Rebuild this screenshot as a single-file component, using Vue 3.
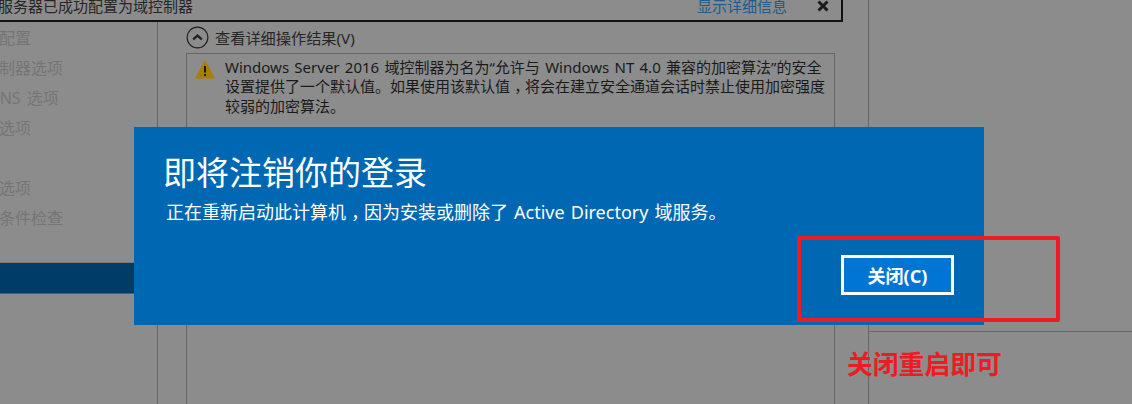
<template>
  <div class="page">
    <div class="wizard">
      <div class="banner">
        <span class="banner-text">服务器已成功配置为域控制器</span>
        <a class="details-link">显示详细信息</a>
        <svg class="close-x" viewBox="0 0 12 12">
          <path d="M1.5 1.5l9 9M10.5 1.5l-9 9" />
        </svg>
      </div>
      <div class="wizard-body">
        <nav class="steps">
          <div
            v-for="step in steps"
            :key="step.label"
            class="step"
            :class="{ active: step.active, latin: step.latin }"
          >{{ step.label }}</div>
        </nav>
        <main class="results">
          <div class="expander">
            <svg class="chevron-circle" viewBox="0 0 24 24">
              <circle cx="12" cy="12" r="10.8" />
              <path d="M7.5 14l4.5-4 4.5 4" />
            </svg>
            <span>查看详细操作结果(V)</span>
          </div>
          <div class="result-box">
            <svg class="warn-icon" viewBox="0 0 20 20">
              <path class="warn-tri" d="M10 1L20 19.5H0z" />
              <path class="warn-mark" d="M9 7h2v6.5H9zM9 15h2v2H9z" />
            </svg>
            <p class="result-text">Windows Server 2016 域控制器为名为“允许与 Windows NT 4.0 兼容的加密算法”的安全<br>设置提供了一个默认值。如果使用该默认值<span class="mid-comma">，</span>将会在建立安全通道会话时禁止使用加密强度<br>较弱的加密算法。</p>
          </div>
        </main>
      </div>
    </div>
    <aside class="side">
      <div class="side-top"></div>
    </aside>

    <section class="signout-dialog">
      <h1 class="dialog-title">即将注销你的登录</h1>
      <p class="dialog-msg">正在重新启动此计算机<span class="mid-comma">，</span>因为安装或删除了 Active Directory 域服务。</p>
      <div class="dialog-actions">
        <button class="close-btn">关闭(C)</button>
      </div>
    </section>

    <div class="red-frame"></div>
    <div class="red-note">关闭重启即可</div>
  </div>
</template>

<script setup>
const steps = [
  { label: '部署配置' },
  { label: '域控制器选项' },
  { label: 'DNS 选项', latin: true },
  { label: '其他选项' },
  { label: '路径' },
  { label: '查看选项' },
  { label: '先决条件检查' },
  { label: '安装' },
  { label: '结果', active: true },
]
</script>

<style>
html, body {
  margin: 0;
  background: #8c8c8c;
}
</style>

<style scoped>
.page {
  position: relative;
  display: flex;
  width: 1132px;
  height: 404px;
  overflow: hidden;
  background: #8c8c8c;
  color: #1a1a1a;
  font-family: "Noto Sans", "Noto Sans CJK SC", sans-serif;
  font-size: 15px;
}

/* comma sits in the middle of its slot in the original font */
.mid-comma {
  display: inline-block;
  box-sizing: border-box;
  width: 1em;
  padding-left: 0.28em;
  overflow: hidden;
  vertical-align: bottom;
}

.wizard {
  width: 868px;
  flex-shrink: 0;
  display: flex;
  flex-direction: column;
  border-right: 1px solid #666;
}

.banner {
  display: flex;
  align-items: center;
  width: 841px;
  height: 20px;
  flex-shrink: 0;
  border-right: 2px solid #111;
  border-bottom: 2px solid #111;
}

.banner-text {
  margin-left: -2px;
  margin-top: -9px;
  line-height: 20px;
  color: #262626;
}

.details-link {
  margin-left: auto;
  margin-top: -9px;
  line-height: 20px;
  color: #1d5c8c;
}

.close-x {
  width: 12px;
  height: 12px;
  margin: -9px 12px 0 30px;
  fill: none;
  stroke: #1a1a1a;
  stroke-width: 3;
}

.wizard-body {
  flex: 1;
  display: flex;
}

.steps {
  width: 157px;
  flex-shrink: 0;
  border-right: 1px solid #666;
  overflow: hidden;
}

.step {
  height: 30px;
  text-indent: -33px;
  line-height: 30px;
  font-size: 16px;
  color: #757575;
  white-space: nowrap;
}

.step.latin {
  text-indent: -12px;
  word-spacing: 2px;
}

.step.active {
  background: #003c68;
  color: #003c68;
  box-shadow: 0 -1px 0 #7a7a7a, 0 1px 0 #44617c;
}

.steps .step:first-child {
  margin-top: 1px;
}

.results {
  flex: 1;
  min-width: 0;
  padding: 3px 0 0 28px;
}

.expander {
  display: flex;
  align-items: center;
  gap: 6px;
  height: 24px;
  margin-bottom: 4px;
  font-size: 15.2px;
  color: #262626;
}

.chevron-circle {
  width: 23px;
  height: 23px;
  flex-shrink: 0;
  fill: none;
  stroke: #222;
}

.chevron-circle circle {
  stroke-width: 1.2;
}

.chevron-circle path {
  stroke-width: 2.4;
}

.result-box {
  display: flex;
  align-items: flex-start;
  gap: 10px;
  width: 649px;
  height: 400px;
  box-sizing: border-box;
  padding: 5px 0 0 8px;
  border: 1px solid #666;
}

.warn-icon {
  width: 20px;
  height: 20px;
  flex-shrink: 0;
}

.warn-tri {
  fill: #a87f00;
}

.warn-mark {
  fill: #1f1a00;
}

.result-text {
  margin: -1px 0 0;
  line-height: 19.4px;
  font-size: 15px;
  word-spacing: 1.4px;
  white-space: nowrap;
  color: #1a1a1a;
}

.side {
  flex: 1;
}

.side-top {
  height: 331px;
  border-bottom: 1px solid #666;
}

.signout-dialog {
  position: absolute;
  left: 134px;
  top: 127px;
  width: 850px;
  height: 198px;
  box-sizing: border-box;
  padding: 24px 30px 0 29px;
  background: #0067b3;
  color: #fff;
}

.dialog-title {
  margin: 0;
  font-size: 33px;
  font-weight: 400;
  line-height: 44px;
}

.dialog-msg {
  margin: 4px 0 0 3px;
  font-size: 18px;
  line-height: 26px;
  word-spacing: 1.4px;
}

.dialog-actions {
  display: flex;
  justify-content: flex-end;
  margin-top: 30px;
}

.close-btn {
  width: 113px;
  height: 40px;
  box-sizing: border-box;
  border: 3px solid #fff;
  background: #0075d4;
  color: #fff;
  font-family: inherit;
  font-size: 18px;
  font-weight: 700;
  padding: 0;
}

.red-frame {
  position: absolute;
  left: 797px;
  top: 236px;
  width: 263px;
  height: 86px;
  box-sizing: border-box;
  border: 4px solid #ed1c24;
  border-radius: 2px;
}

.red-note {
  position: absolute;
  left: 847px;
  top: 345px;
  color: #ed1c24;
  font-size: 25.8px;
  font-weight: 700;
  line-height: 38px;
  white-space: nowrap;
}
</style>
